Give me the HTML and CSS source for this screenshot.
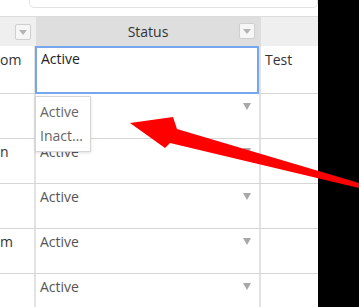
FILE: index.html
```html
<!DOCTYPE html>
<html lang="en">

<head>
    <meta charset="UTF-8">
    <meta name="viewport" content="width=device-width, initial-scale=1.0">
    <title>Status Grid</title>
    <link rel="stylesheet" href="styles.css">
</head>

<body>
    <div class="grid-area">
        <div class="toolbar">
            <div class="search"></div>
        </div>

        <div class="row header">
            <div class="cell col-name"><span class="filter-btn"></span></div>
            <div class="cell col-status selected">Status <span class="filter-btn"></span></div>
            <div class="cell col-note"></div>
        </div>

        <div class="row first">
            <div class="cell col-name">om</div>
            <div class="cell col-status">
                <div class="editor">Active</div>
                <ul class="options">
                    <li>Active</li>
                    <li>Inactive</li>
                </ul>
            </div>
            <div class="cell col-note">Test</div>
        </div>

        <div class="row">
            <div class="cell col-name"></div>
            <div class="cell col-status"><span class="value">Active</span><span class="caret"></span></div>
            <div class="cell col-note"></div>
        </div>

        <div class="row">
            <div class="cell col-name">n</div>
            <div class="cell col-status"><span class="value">Active</span><span class="caret"></span></div>
            <div class="cell col-note"></div>
        </div>

        <div class="row">
            <div class="cell col-name"></div>
            <div class="cell col-status"><span class="value">Active</span><span class="caret"></span></div>
            <div class="cell col-note"></div>
        </div>

        <div class="row">
            <div class="cell col-name">m</div>
            <div class="cell col-status"><span class="value">Active</span><span class="caret"></span></div>
            <div class="cell col-note"></div>
        </div>

        <div class="row">
            <div class="cell col-name"></div>
            <div class="cell col-status"><span class="value">Active</span><span class="caret"></span></div>
            <div class="cell col-note"></div>
        </div>
    </div>

    <div class="blackbar"></div>

    <!-- annotation arrow drawn over the grid -->
    <svg class="arrow" width="359" height="307" viewBox="0 0 359 307">
        <polygon points="130,123 173,117 177,129 359,183 359,188 170,143 165,148" fill="#ff0000" />
    </svg>
</body>

</html>
```

FILE: styles.css
```css
body {
    margin: 0;
    width: 359px;
    height: 307px;
    overflow: hidden;
    display: flex;
    font-family: "Open Sans", "Noto Sans", sans-serif;
    font-size: 14px;
    color: #444;
    background: #fff;
    position: relative;
}

.grid-area {
    width: 318px;
    flex-shrink: 0;
    overflow: hidden;
}

.blackbar {
    flex: 1;
    background: #000;
}

.toolbar {
    height: 17px;
    overflow: hidden;
}

.search {
    margin-left: 29px;
    margin-top: -12px;
    height: 18px;
    border: 1px solid #e3e3e3;
    border-radius: 5px;
}

.row {
    display: flex;
    height: 44px;
    border-bottom: 1px solid #d6d6d6;
}

.row.first {
    height: 47px;
}

.cell {
    box-sizing: border-box;
    line-height: 20px;
    padding-top: 3px;
    white-space: nowrap;
    overflow: hidden;
}

.col-name {
    width: 36px;
    border-right: 2px solid #e2e2e2;
    color: #333;
}

.col-status {
    width: 225px;
    border-right: 2px solid #e2e2e2;
    padding-left: 4px;
    padding-right: 8px;
    display: flex;
    justify-content: space-between;
    align-items: flex-start;
}

.col-note {
    flex: 1;
    padding-left: 4px;
    color: #333;
}

.row.first .cell {
    padding-top: 4px;
    overflow: visible;
}

.row.first .col-status {
    position: relative;
}

/* header */
.row.header {
    height: 29px;
    border-top: 1px solid #dcdcdc;
    border-bottom: none;
    background: #efefef;
    margin-top: -1px;
}

.header .cell {
    border-right: none;
    padding-top: 0;
    line-height: 29px;
    display: flex;
    align-items: center;
    justify-content: flex-end;
    padding-right: 5px;
}

.header .col-status {
    width: 225px;
    justify-content: center;
    position: relative;
    color: #333;
}

.header .selected {
    background: #dedede;
}

.header .col-status .filter-btn {
    position: absolute;
    right: 6px;
    top: 6px;
}

.filter-btn {
    width: 14px;
    height: 14px;
    border: 1px solid #cfcfcf;
    border-radius: 2px;
    background: #f6f6f6;
    display: flex;
    align-items: center;
    justify-content: center;
}

.filter-btn::after {
    content: "";
    border-left: 4px solid transparent;
    border-right: 4px solid transparent;
    border-top: 5px solid #b4b4b4;
    margin-top: 1px;
}

/* cells */
.value {
    color: #555;
}

.caret {
    border-left: 4.5px solid transparent;
    border-right: 4.5px solid transparent;
    border-top: 7px solid #a8a8a8;
    margin-top: 6px;
}

/* active editor */
.editor {
    position: absolute;
    left: -1px;
    top: 0;
    width: 224px;
    height: 48px;
    box-sizing: border-box;
    border: 2px solid #78a6ee;
    padding: 1px 4px;
    color: #222;
    background: #fff;
    z-index: 2;
}

.options {
    position: absolute;
    left: -1px;
    top: 50px;
    width: 56px;
    box-sizing: border-box;
    margin: 0;
    padding: 3px 0;
    list-style: none;
    background: #fff;
    border: 1px solid #d6d6d6;
    box-shadow: 0 1px 3px rgba(0, 0, 0, 0.12);
    z-index: 3;
}

.options li {
    line-height: 24px;
    padding: 0 4px;
    color: #666;
    overflow: hidden;
    text-overflow: ellipsis;
}

.arrow {
    position: absolute;
    left: 0;
    top: 0;
    pointer-events: none;
    z-index: 5;
}
```
